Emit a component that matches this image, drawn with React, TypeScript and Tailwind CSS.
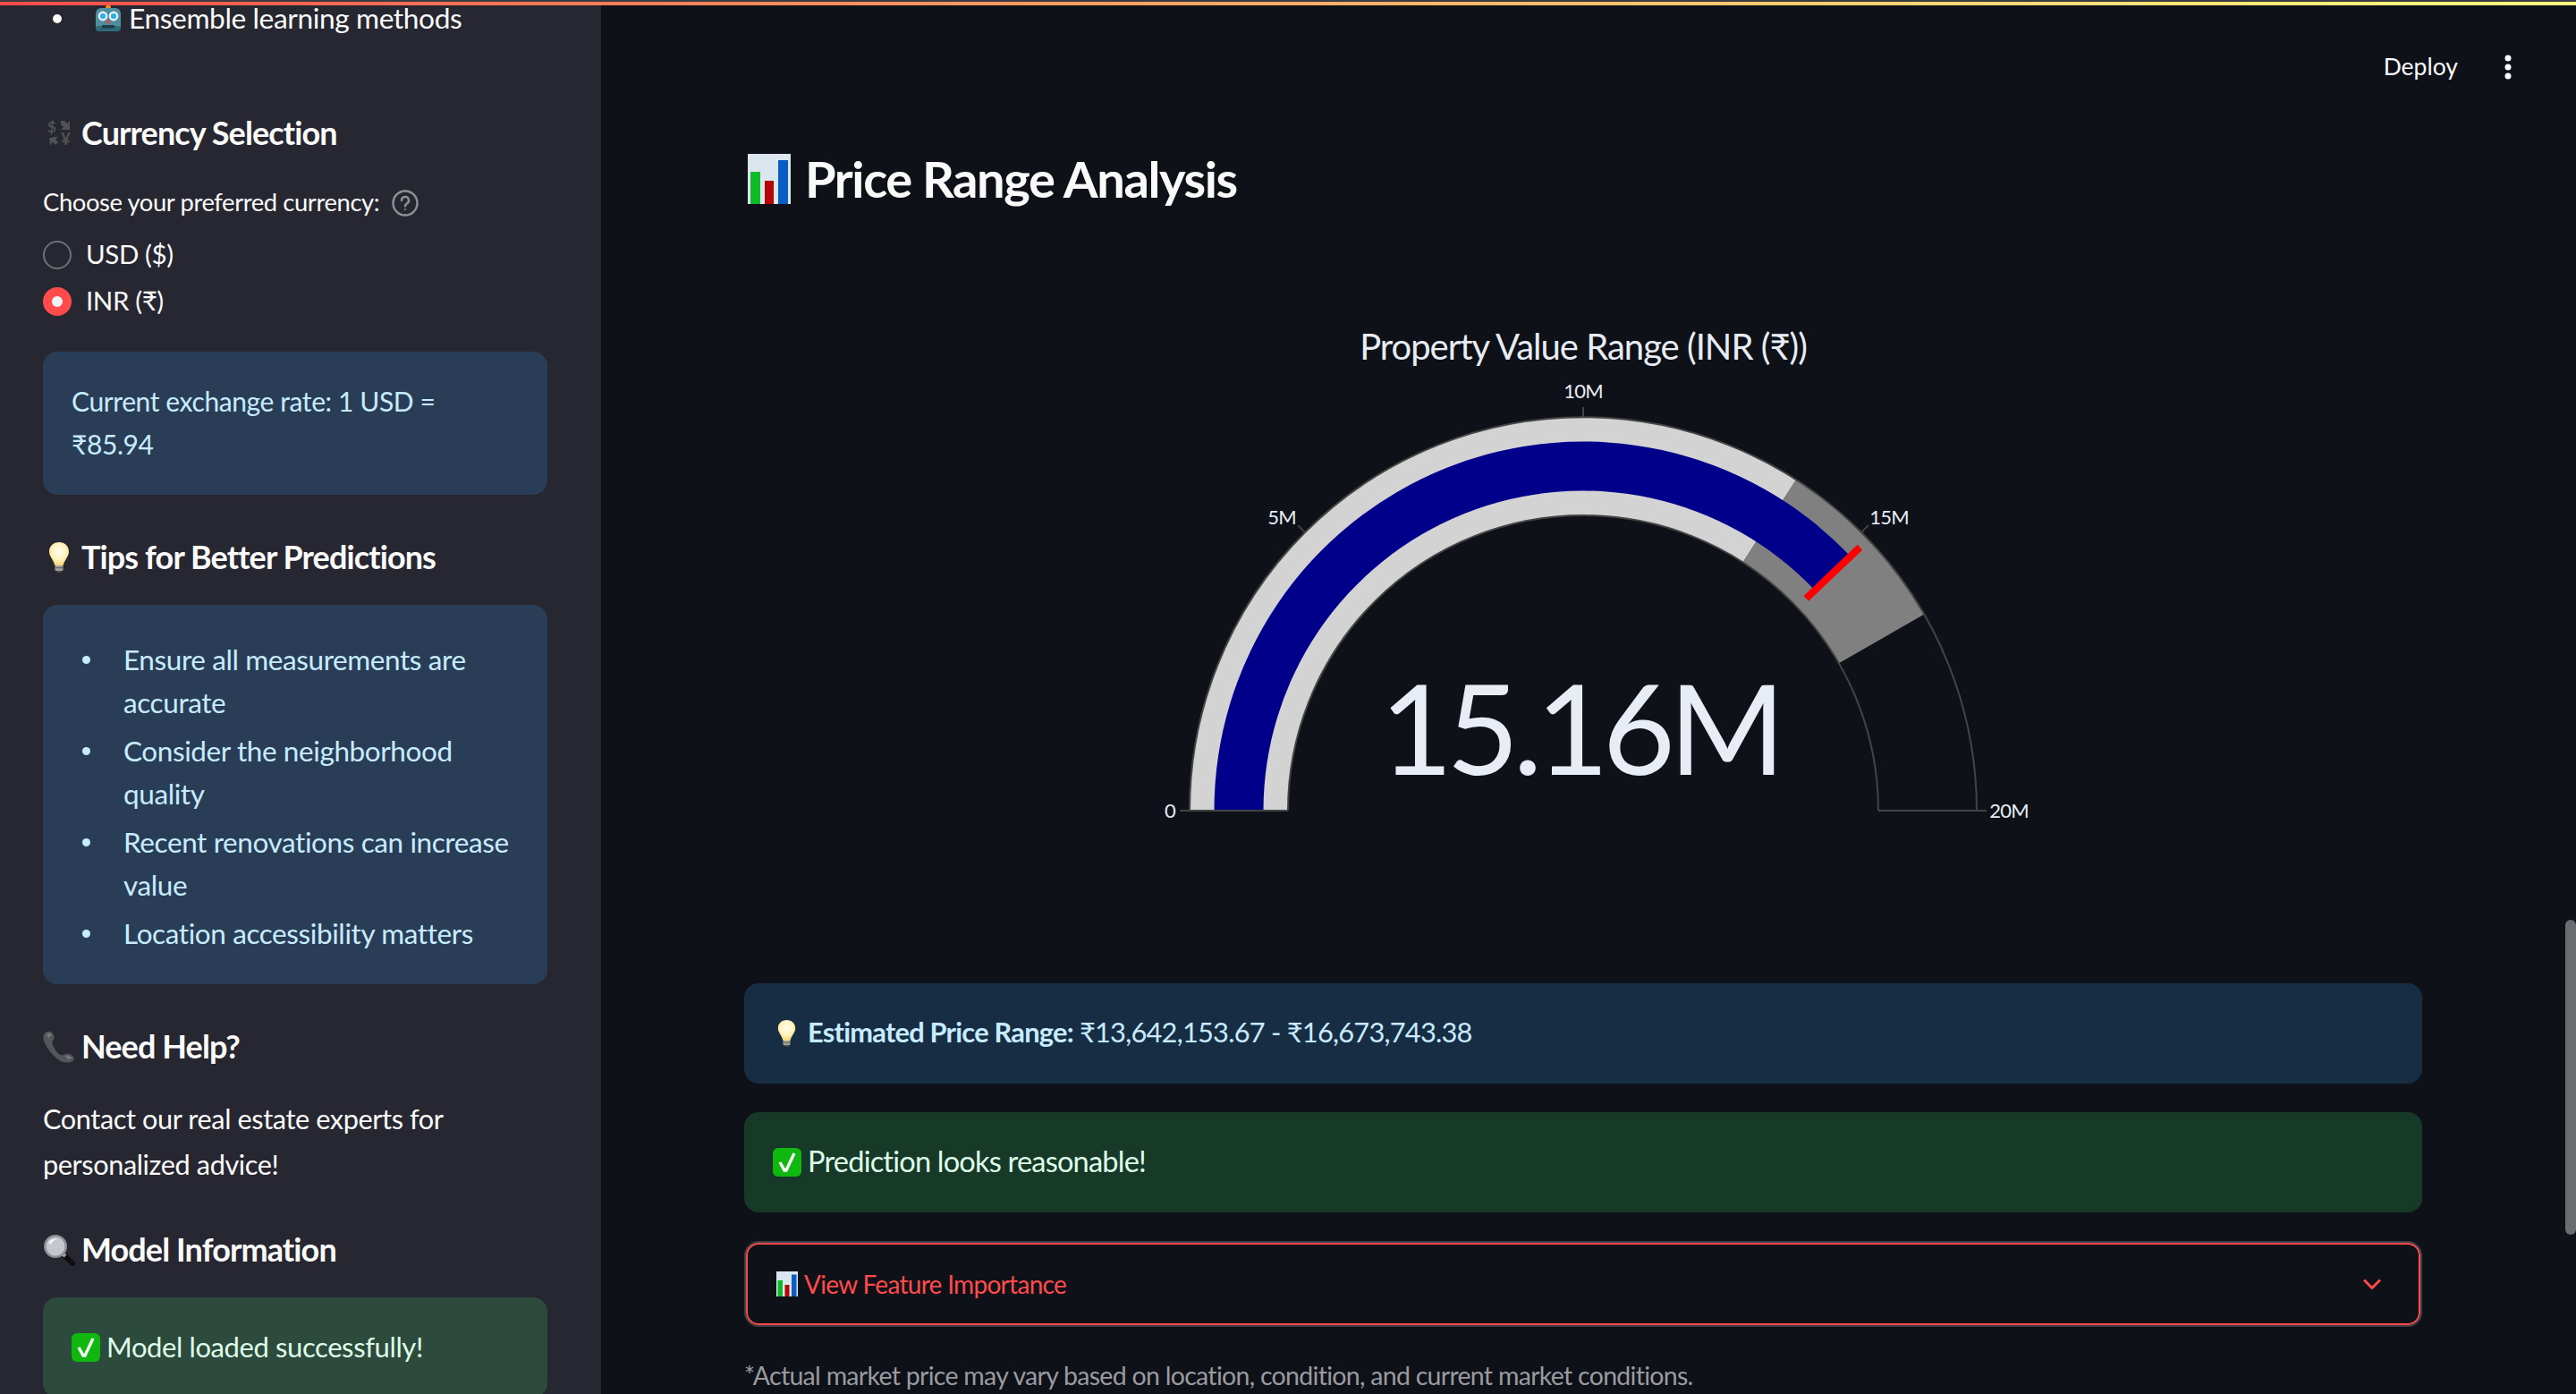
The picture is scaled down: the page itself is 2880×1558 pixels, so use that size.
const CX = 1770;
const CY = 906;

const polar = (r: number, v: number) => {
  const a = Math.PI * (1 - v / 20);
  return [CX + r * Math.cos(a), CY - r * Math.sin(a)];
};

const band = (r0: number, r1: number, from: number, to: number) => {
  const [ax, ay] = polar(r1, from);
  const [bx, by] = polar(r1, to);
  const [cx, cy] = polar(r0, to);
  const [dx, dy] = polar(r0, from);
  return `M${ax} ${ay}A${r1} ${r1} 0 0 1 ${bx} ${by}L${cx} ${cy}A${r0} ${r0} 0 0 0 ${dx} ${dy}Z`;
};

const RobotEmoji = () => (
  <svg viewBox="0 0 30 32" className="w-[30px] h-[32px] shrink-0">
    <path d="M12 4c0-5 6-5 6 0z" fill="#f08a24" />
    <rect x="1" y="4" width="28" height="26" rx="6" fill="#4d8fa1" />
    <rect x="1" y="24" width="28" height="6" rx="3" fill="#2f6a7c" />
    <circle cx="9" cy="13" r="5.4" fill="#e3eef1" />
    <circle cx="21" cy="13" r="5.4" fill="#e3eef1" />
    <circle cx="9" cy="13" r="3" fill="#29aee6" />
    <circle cx="21" cy="13" r="3" fill="#29aee6" />
    <path d="M15 16l2.6 5h-5.2z" fill="#e0483e" />
    <rect x="8" y="23" width="14" height="3.5" rx="1" fill="#1f3d47" />
  </svg>
);

const CurrencyEmoji = () => (
  <svg viewBox="0 0 30 30" className="w-[30px] h-[30px] shrink-0 ml-[4px] overflow-visible" fill="#515257">
    <text x="1" y="14" fontSize="17" fontWeight="700" fill="#515257">$</text>
    <text x="16" y="28" fontSize="19" fontWeight="700" fill="#515257">¥</text>
    <path d="M16 1l4 0 3 3 3-3v10H16l3-3-3-3z" />
    <path d="M3 20l4 0 0-1 6 0-3 3 3 3-3 3-3-3-3 3z" />
  </svg>
);

const BulbEmoji = ({ small }: { small?: boolean }) => {
  const id = small ? "bulb-small" : "bulb-large";
  return (
    <svg viewBox="0 0 22 34" className={small ? "w-[21px] h-[30px] shrink-0" : "w-[22px] h-[34px] shrink-0 ml-[7px]"}>
      <defs>
        <radialGradient id={id} cx="0.5" cy="0.4" r="0.6">
          <stop offset="0" stopColor="#fffdf0" />
          <stop offset="0.55" stopColor="#fff4c2" />
          <stop offset="1" stopColor="#f7d777" />
        </radialGradient>
      </defs>
      <path d="M11 0C4.5 0 0 4.6 0 10.5c0 5.5 4.6 8.5 6.4 15.5h9.2C17.4 19 22 16 22 10.5 22 4.6 17.5 0 11 0z" fill={`url(#${id})`} />
      <rect x="6.5" y="26" width="9" height="6" rx="1" fill="#a3a39c" />
      <rect x="6.5" y="28" width="9" height="1.2" fill="#66665f" />
      <rect x="8.5" y="32" width="5" height="2" rx="1" fill="#4c4c48" />
    </svg>
  );
};

const PhoneEmoji = () => (
  <svg viewBox="0 0 36 36" className="w-[36px] h-[36px] shrink-0">
    <path
      d="M2 3c3-3 7-3 9 0 2 3 2 6 0 8-1 1-1 3 1 7s5 8 8 9c2 1 3 0 5-1 3-1 7 0 9 3 1 2 1 4-1 5-3 2-8 2-13 0C12 30 3 18 1 11 0 8 0 5 2 3z"
      fill="#55565a"
    />
    <path d="M4 4c2-2 5-1 6 1l-4 3zM25 28c2-1 6 0 8 3l-5 1z" fill="#77787c" />
  </svg>
);

const SearchEmoji = () => (
  <svg viewBox="0 0 36 36" className="w-[36px] h-[36px] shrink-0">
    <path d="M23 23l10 10" stroke="#0d0e10" strokeWidth="6" strokeLinecap="round" />
    <path d="M22 22l3 3" stroke="#9ea0a4" strokeWidth="4" />
    <circle cx="14" cy="14" r="13" fill="#8f9196" />
    <circle cx="14" cy="14" r="10.5" fill="#c4c7cc" />
    <path d="M6 10c2-4 6-5 10-4-4 1-6 3-7 6z" fill="#f1f2f4" />
  </svg>
);

const CheckEmoji = ({ size }: { size: string }) => (
  <svg viewBox="0 0 32 32" className={`${size} shrink-0`}>
    <rect x="0" y="0" width="32" height="32" rx="6" fill="#0fb70f" />
    <path d="M8 16l5 9h2L24 6" fill="none" stroke="#f6fff6" strokeWidth="3.4" />
  </svg>
);

const ChartEmoji = ({ size }: { size: string }) => (
  <svg viewBox="0 0 48 56" className={`${size} shrink-0`} preserveAspectRatio="none">
    <rect width="48" height="56" fill="#dbe6ef" />
    <rect x="3" y="20" width="11" height="36" fill="#0dbb27" />
    <rect x="19" y="30" width="10" height="26" fill="#b80404" />
    <rect x="34" y="7" width="11" height="49" fill="#0a5cc7" />
  </svg>
);

const Heading = ({ icon, children }: { icon: React.ReactNode; children: React.ReactNode }) => (
  <div className="flex items-center h-[48px]">
    <div className="w-[43px] flex shrink-0">{icon}</div>
    <h3 className="-mt-[2px] text-[36px] leading-[48px] font-bold text-[#fafafa] tracking-[-0.025em]">{children}</h3>
  </div>
);

const tips = [
  { text: ["Ensure all measurements are", "accurate"] },
  { text: ["Consider the neighborhood", "quality"] },
  { text: ["Recent renovations can increase", "value"] },
  { text: ["Location accessibility matters"] },
];

const Sidebar = () => (
  <aside className="w-[672px] h-full shrink-0 bg-[#262730] pl-12 pr-[60px] overflow-hidden text-[#fafafa] tracking-[-0.025em]">
    <div className="flex items-center h-[48px] -mt-[3px] text-[32px]">
      <span className="w-[10px] h-[10px] rounded-full bg-[#fafafa] ml-[11px] mr-[37px] shrink-0" />
      <RobotEmoji />
      <span className="ml-[8px] text-[31.7px]">Ensemble learning methods</span>
    </div>

    <div className="mt-[80px]">
      <Heading icon={<CurrencyEmoji />}>Currency Selection</Heading>
    </div>

    <div className="mt-[34px] h-[40px] flex items-center text-[27.4px]">
      <span className="-mt-[2px]">Choose your preferred currency:</span>
      <svg viewBox="0 0 30 30" className="w-[30px] h-[30px] ml-[14px]" fill="none" stroke="#8f9096" strokeWidth="2.4">
        <circle cx="15" cy="15" r="13.5" />
        <path d="M11 12a4 4 0 1 1 6 3.4c-1.4.9-2 1.6-2 3" strokeLinecap="round" />
        <circle cx="15" cy="22" r="1" fill="#8f9096" stroke="none" />
      </svg>
    </div>

    <div className="mt-[22px] h-[32px] flex items-center text-[29.5px]">
      <span className="w-[32px] h-[32px] rounded-full border-2 border-[#6f7077] shrink-0" />
      <span className="ml-[16px] -mt-[1px]">USD ($)</span>
    </div>
    <div className="mt-[20px] h-[32px] flex items-center text-[29.5px]">
      <span className="w-[32px] h-[32px] rounded-full bg-[#ff4b4b] flex items-center justify-center shrink-0">
        <span className="w-[12px] h-[12px] rounded-full bg-[#f0f2f6]" />
      </span>
      <span className="ml-[16px] -mt-[1px]">INR (₹)</span>
    </div>

    <div className="mt-[40px] rounded-2xl bg-[#2a3d56] px-8 pt-[31px] pb-[33px] text-[30px] leading-[48px] text-[#c7ebff]">
      Current exchange rate: 1 USD =
      <br />
      ₹85.94
    </div>

    <div className="mt-[46px]">
      <Heading icon={<BulbEmoji />}>Tips for Better Predictions</Heading>
    </div>

    <div className="mt-[29px] h-[424px] rounded-2xl bg-[#2a3d56] pt-[37px] pl-[44px] text-[31.5px] leading-[48px] text-[#c7ebff]">
      <ul className="flex flex-col gap-[6px]">
        {tips.map((tip, index) => (
          <li key={index} className="flex">
            <span className="w-[9px] h-[9px] mt-[20px] rounded-full bg-[#c7ebff] shrink-0" />
            <span className="ml-[37px]">
              {tip.text.map((line) => (
                <span key={line} className="block whitespace-nowrap">
                  {line}
                </span>
              ))}
            </span>
          </li>
        ))}
      </ul>
    </div>

    <div className="mt-[46px]">
      <Heading icon={<PhoneEmoji />}>Need Help?</Heading>
    </div>

    <p className="mt-[31px] text-[30.7px] leading-[51px]">
      Contact our real estate experts for
      <br />
      personalized advice!
    </p>

    <div className="mt-[46px]">
      <Heading icon={<SearchEmoji />}>Model Information</Heading>
    </div>

    <div className="mt-[29px] h-[112px] rounded-2xl bg-[#2d4b3c] px-8 flex items-center text-[31px] text-[#dffde9]">
      <CheckEmoji size="w-[32px] h-[32px]" />
      <span className="ml-[7px] -mt-[1px]">Model loaded successfully!</span>
    </div>
  </aside>
);

const Gauge = () => {
  const ticks = [0, 5, 10, 15, 20];
  const [t0x, t0y] = polar(344, 15.16);
  const [t1x, t1y] = polar(427, 15.16);
  const outer = `M${CX - 440} ${CY}A440 440 0 0 1 ${CX + 440} ${CY}`;
  const inner = `M${CX - 330} ${CY}A330 330 0 0 1 ${CX + 330} ${CY}`;
  return (
    <svg viewBox="832 360 1876 600" className="w-full h-[600px] block">
      <text x={CX} y="402" textAnchor="middle" fontSize="40" fill="#e8ecf4" letterSpacing="-1">
        Property Value Range (INR (₹))
      </text>

      <path d={band(330, 440, 0, 13.642)} fill="#d3d3d3" />
      <path d={band(330, 440, 13.642, 16.674)} fill="#808080" />
      <path d={band(357.5, 412.5, 0, 15.16)} fill="#00008b" />
      <line x1={t0x} y1={t0y} x2={t1x} y2={t1y} stroke="#ff0000" strokeWidth="8" />

      <path d={outer} fill="none" stroke="#444" strokeWidth="2" />
      <path d={inner} fill="none" stroke="#444" strokeWidth="2" />
      <path d={`M${CX - 440} ${CY}H${CX - 330}M${CX + 330} ${CY}H${CX + 440}`} stroke="#444" strokeWidth="2" />
      {ticks.map((v) => {
        const [ax, ay] = polar(440, v);
        const [bx, by] = polar(451, v);
        return <line key={v} x1={ax} y1={ay} x2={bx} y2={by} stroke="#444" strokeWidth="2" />;
      })}

      <g fontSize="22" fill="#e8ecf4" letterSpacing="-0.8">
        <text x="1308" y="914" textAnchor="middle">0</text>
        <text x="1433" y="586" textAnchor="middle">5M</text>
        <text x="1770" y="445" textAnchor="middle">10M</text>
        <text x="2112" y="586" textAnchor="middle">15M</text>
        <text x="2246" y="914" textAnchor="middle">20M</text>
      </g>

      <text x="1766" y="866" textAnchor="middle" fontSize="140" fill="#e8ecf4" letterSpacing="-7">
        15.16M
      </text>
    </svg>
  );
};

const Main = () => (
  <main className="flex-1 min-w-0 h-full pl-[160px] pr-[172px] overflow-hidden">
    <div className="mt-[51px] h-[48px] flex items-center justify-end -mr-[172px] pr-[72px]">
      <span className="text-[26.5px] text-[#fafafa]">Deploy</span>
      <svg viewBox="0 0 8 28" className="w-[8px] h-[28px] ml-[52px]" fill="#fafafa">
        <circle cx="4" cy="4" r="3.5" />
        <circle cx="4" cy="14" r="3.5" />
        <circle cx="4" cy="24" r="3.5" />
      </svg>
    </div>

    <h2 className="mt-[65px] h-[72px] pl-[4px] flex items-center text-[56px] leading-[72px] font-bold text-[#fafafa] tracking-[-0.025em]">
      <ChartEmoji size="w-[48px] h-[56px]" />
      <span className="ml-[16px]">Price Range Analysis</span>
    </h2>

    <div className="mt-[124px]">
      <Gauge />
    </div>

    <div className="mt-[139px] h-[112px] rounded-2xl bg-[#172d43] pl-[37px] flex items-center text-[30.8px] text-[#c7ebff] tracking-[-0.025em]">
      <BulbEmoji small />
      <span className="ml-[13px] -mt-[1px]">
        <strong className="font-bold">Estimated Price Range:</strong> ₹13,642,153.67 - ₹16,673,743.38
      </span>
    </div>

    <div className="mt-[32px] h-[112px] rounded-2xl bg-[#173928] pl-[32px] flex items-center text-[32.6px] text-[#dffde9] tracking-[-0.025em]">
      <CheckEmoji size="w-[32px] h-[32px]" />
      <span className="ml-[7px] -mt-[1px]">Prediction looks reasonable!</span>
    </div>

    <div className="mt-[34px] mx-[2px] h-[92px] rounded-[14px] border-2 border-[#ff4b4b] outline-2 outline-[#3d3f48] pl-[32px] pr-[42px] flex items-center justify-between text-[28px] text-[#ff4b4b] tracking-[-0.025em]">
      <span className="flex items-center">
        <ChartEmoji size="w-[24px] h-[28px]" />
        <span className="ml-[7px]">View Feature Importance</span>
      </span>
      <svg viewBox="0 0 20 12" className="w-[20px] h-[12px]" fill="none" stroke="#ff4b4b" strokeWidth="3">
        <path d="M1 1.5l9 9 9-9" />
      </svg>
    </div>

    <p className="mt-[36px] text-[28.5px] leading-[40px] text-[#9a9ba0] whitespace-nowrap tracking-[-0.025em]">
      *Actual market price may vary based on location, condition, and current market conditions.
    </p>
  </main>
);

export default function App() {
  return (
    <div className="relative w-[2880px] h-[1558px] overflow-hidden bg-[#0e1117] flex font-[Lato,'Noto_Sans',sans-serif]">
      <Sidebar />
      <Main />
      {/* Decoration strip over the top of the app */}
      <div className="absolute top-0 left-0 right-0 h-[2px] bg-[#3a3b42]" />
      <div className="absolute top-[2px] left-0 right-0 h-[4px] bg-gradient-to-r from-[#ff4b4b] to-[#fffd80]" />
      {/* Scrollbar thumb */}
      <div className="absolute right-0 top-[1028px] w-[12px] h-[352px] rounded-full bg-[#6b6c70]" />
    </div>
  );
}
